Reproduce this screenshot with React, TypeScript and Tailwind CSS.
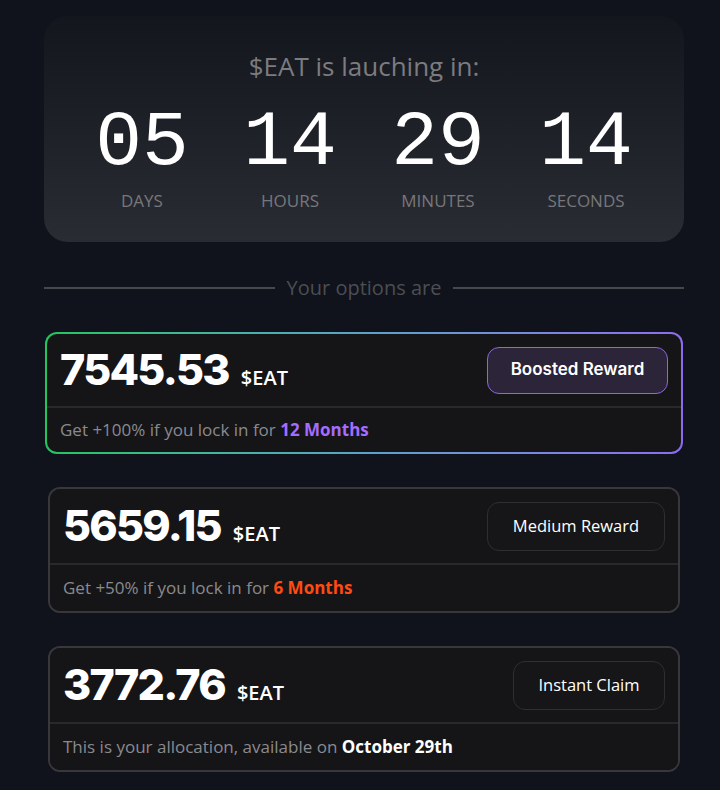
import React from 'react';

const sans = "font-['Open_Sans','Noto_Sans',sans-serif]";
const heavy = "font-['Inter','Liberation_Sans',sans-serif]";
const mono = "font-['Liberation_Mono','DejaVu_Sans_Mono',monospace]";

const countdown = [
  { value: '05', label: 'DAYS' },
  { value: '14', label: 'HOURS' },
  { value: '29', label: 'MINUTES' },
  { value: '14', label: 'SECONDS' },
];

type OptionProps = {
  amount: string;
  button: React.ReactNode;
  footer: React.ReactNode;
  top?: string;
  bottom?: string;
};

const OptionBody = ({ amount, button, footer, top = 'h-[74px]', bottom = 'h-[46px]' }: OptionProps) => (
  <div className="bg-[#151518] rounded-[10px] overflow-hidden">
    <div className={`${top} flex items-center justify-between pl-[13px] pr-[13px]`}>
      <div className="flex items-baseline gap-3 text-white">
        <span className={`${heavy} font-extrabold text-[43px] leading-none tracking-[-0.04em]`}>{amount}</span>
        <span className={`${sans} font-semibold text-[20px]`}>$EAT</span>
      </div>
      {button}
    </div>
    <div className="h-[2px] bg-[#29292d]" />
    <div className={`${sans} ${bottom} flex items-center pl-[13px] text-[17px] text-[#8a8a8e]`}>{footer}</div>
  </div>
);

export default function App() {
  return (
    <div className="min-h-screen bg-[#10131b] pl-[44px] pr-[36px] pt-[16px] pb-2">
      {/* Countdown */}
      <div className="rounded-[24px] bg-gradient-to-b from-[#13161d] to-[#2a2c33] h-[226px] flex flex-col items-center pt-[37px]">
        <h2 className={`${sans} text-[26px] leading-none text-[#7c7c80]`}>$EAT is lauching in:</h2>
        <div className="grid grid-cols-4 w-[592px] mt-[28px]">
          {countdown.map((c) => (
            <div key={c.label} className="flex flex-col items-center">
              <span className={`${mono} text-[78px] leading-[72px] text-white`}>{c.value}</span>
              <span className={`${sans} text-[17px] text-[#77777b] mt-[13px] leading-none`}>{c.label}</span>
            </div>
          ))}
        </div>
      </div>

      {/* Divider */}
      <div className="flex items-center gap-3 mt-[36px]">
        <div className="flex-1 h-[2px] bg-[#46484e]" />
        <span className={`${sans} text-[20px] text-[#4b4e55] leading-none`}>Your options are</span>
        <div className="flex-1 h-[2px] bg-[#46484e]" />
      </div>

      <div className="flex flex-col gap-[33px] mt-[34px]">
        {/* Boosted */}
        <div className="mx-[1px] p-[2px] rounded-[12px] bg-gradient-to-r from-[#22c55e] via-[#5ba3c9] to-[#8b6cf0]">
          <OptionBody
            amount="7545.53"
            top="h-[72px]"
            bottom="h-[44px]"
            button={
              <button className={`${heavy} h-[47px] w-[181px] rounded-[12px] border border-[#8f62f0] bg-[#2c2439] text-white font-semibold text-[17px]`}>
                Boosted Reward
              </button>
            }
            footer={
              <span>
                Get +100% if you lock in for <span className="font-bold text-[#a46cff]">12 Months</span>
              </span>
            }
          />
        </div>

        {/* Medium */}
        <div className="mx-[4px] border-2 border-[#38383c] rounded-[12px]">
          <OptionBody
            amount="5659.15"
            button={
              <button className={`${sans} h-[49px] w-[178px] rounded-[12px] border border-[#2f2f33] bg-[#161618] text-white text-[16.5px]`}>
                Medium Reward
              </button>
            }
            footer={
              <span>
                Get +50% if you lock in for <span className="font-bold text-[#ff4a12]">6 Months</span>
              </span>
            }
          />
        </div>

        {/* Instant */}
        <div className="mx-[4px] border-2 border-[#38383c] rounded-[12px]">
          <OptionBody
            amount="3772.76"
            button={
              <button className={`${sans} h-[49px] w-[152px] rounded-[12px] border border-[#2f2f33] bg-[#161618] text-white text-[16.5px]`}>
                Instant Claim
              </button>
            }
            footer={
              <span>
                This is your allocation, available on <span className="font-bold text-white">October 29th</span>
              </span>
            }
          />
        </div>
      </div>
    </div>
  );
}
